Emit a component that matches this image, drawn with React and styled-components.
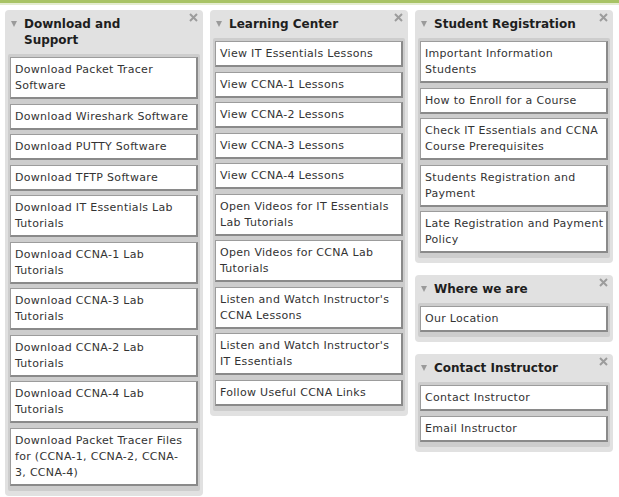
import React from 'react';
import styled, { createGlobalStyle } from 'styled-components';

const GlobalStyle = createGlobalStyle`
  html, body {
    margin: 0;
    padding: 0;
    background: #ffffff;
  }
  body {
    font-family: "DejaVu Sans", Verdana, sans-serif;
  }
`;

const Page = styled.div`
  width: 619px;
  min-height: 497px;
  background: #fff;
`;

const TopBar = styled.div`
  height: 3px;
  background: #a8c365;
  border-bottom: 2px solid #e4ecd0;
`;

const Columns = styled.div`
  display: flex;
  align-items: flex-start;
  gap: 7px;
  padding: 5px 5px 0;
`;

const Column = styled.div`
  display: flex;
  flex-direction: column;
  gap: 12px;
  width: 198px;
`;

const Panel = styled.div`
  position: relative;
  background: #e1e1e1;
  border-radius: 4px;
  padding: 0 3px 5px;
`;

const Header = styled.div`
  display: flex;
  align-items: flex-start;
  gap: 7px;
  padding: 6px 24px 6px 0;
  font-size: 12px;
  font-weight: bold;
  line-height: 16px;
  color: #1e1e1e;
`;

const Arrow = styled.span`
  flex: none;
  width: 0;
  height: 0;
  margin: 5px 0 0 3px;
  border-left: 3.5px solid transparent;
  border-right: 3.5px solid transparent;
  border-top: 6px solid #9a9a9a;
`;

const Close = styled.svg`
  position: absolute;
  top: 3px;
  right: 5px;
  width: 9px;
  height: 9px;
`;

const List = styled.div`
  display: flex;
  flex-direction: column;
  gap: 4.5px;
  background: #cdcdcd;
  border-radius: 2px;
  padding: 3px 2px 5px;
`;

const Item = styled.div`
  background: #fff;
  border-top: 1px solid #9c9c9c;
  border-left: 1px solid #9c9c9c;
  border-right: 2px solid #8a8a8a;
  border-bottom: 2px solid #8a8a8a;
  padding: 4px 2px 3px 4px;
  font-size: 11px;
  line-height: 16px;
  letter-spacing: 0.3px;
  color: #333;
  white-space: pre-line;
`;

const panels = [
  [
    {
      title: 'Download and Support',
      items: [
        'Download Packet Tracer Software',
        'Download Wireshark Software',
        'Download PUTTY Software',
        'Download TFTP Software',
        'Download IT Essentials Lab Tutorials',
        'Download CCNA-1 Lab Tutorials',
        'Download CCNA-3 Lab Tutorials',
        'Download CCNA-2 Lab Tutorials',
        'Download CCNA-4 Lab Tutorials',
        'Download Packet Tracer Files for (CCNA-1, CCNA-2, CCNA-\n3, CCNA-4)',
      ],
    },
  ],
  [
    {
      title: 'Learning Center',
      items: [
        'View IT Essentials Lessons',
        'View CCNA-1 Lessons',
        'View CCNA-2 Lessons',
        'View CCNA-3 Lessons',
        'View CCNA-4 Lessons',
        'Open Videos for IT Essentials Lab Tutorials',
        'Open Videos for CCNA Lab Tutorials',
        "Listen and Watch Instructor's CCNA Lessons",
        "Listen and Watch Instructor's IT Essentials",
        'Follow Useful CCNA Links',
      ],
    },
  ],
  [
    {
      title: 'Student Registration',
      items: [
        'Important Information Students',
        'How to Enroll for a Course',
        'Check IT Essentials and CCNA Course Prerequisites',
        'Students Registration and Payment',
        'Late Registration and Payment Policy',
      ],
    },
    {
      title: 'Where we are',
      items: ['Our Location'],
    },
    {
      title: 'Contact Instructor',
      items: ['Contact Instructor', 'Email Instructor'],
    },
  ],
];

const Widget = ({ title, items }) => (
  <Panel>
    <Header>
      <Arrow />
      <span>{title}</span>
    </Header>
    <Close viewBox="0 0 9 9">
      <path d="M1 1 L8 8 M8 1 L1 8" stroke="#9c9c9c" strokeWidth="2" />
    </Close>
    <List>
      {items.map((i) => (
        <Item key={i}>{i}</Item>
      ))}
    </List>
  </Panel>
);

const App = () => {
  return (
    <Page>
      <GlobalStyle />
      <TopBar />
      <Columns>
        {panels.map((col, n) => (
          <Column key={n}>
            {col.map((p) => (
              <Widget key={p.title} title={p.title} items={p.items} />
            ))}
          </Column>
        ))}
      </Columns>
    </Page>
  );
};

export default App;
